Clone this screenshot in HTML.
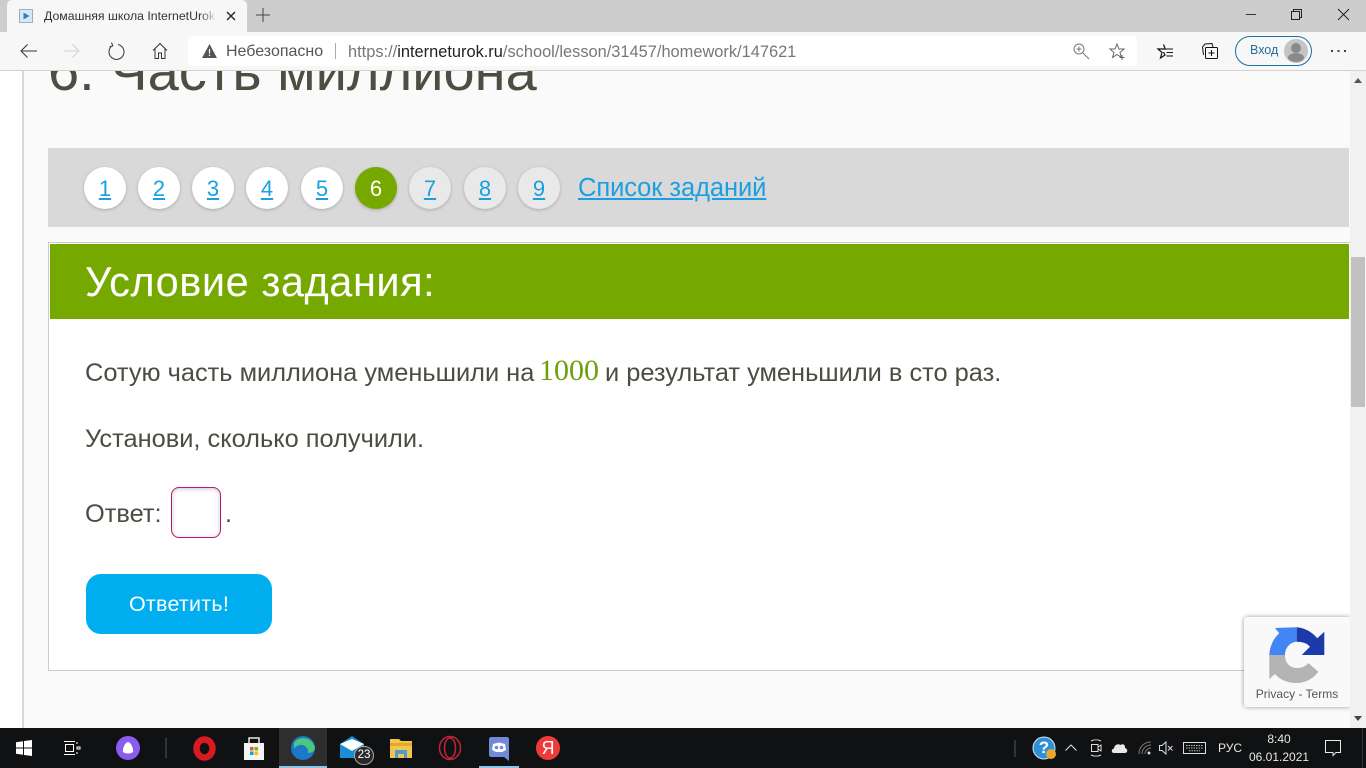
<!DOCTYPE html>
<html lang="ru"><head><meta charset="utf-8"><title>Домашняя школа InternetUrok.ru</title>
<style>
html,body{margin:0;padding:0;width:1366px;height:768px;overflow:hidden;background:#fafafa}
body{position:relative;font-family:"Liberation Sans","Noto Sans CJK SC",sans-serif;color:#4a4a40}
.a{position:absolute;white-space:nowrap}
svg{position:absolute;overflow:visible}
.c{position:absolute;top:167px;width:42px;height:42px;border-radius:50%;background:#fff;box-shadow:0 1px 3px rgba(0,0,0,.22);text-align:center;line-height:44px;font-size:22px;color:#1a9fe0;text-decoration:underline}
.c.v{background:#e9e9e9}
.t{font-size:25.4px;color:#4c4c42;line-height:30px}
.i{fill:none;stroke:#333;stroke-width:1}
</style></head><body>

<!-- page -->
<div class="a" style="left:0;top:70px;width:23px;height:658px;background:#fff"></div>
<div class="a" style="left:22px;top:70px;width:2px;height:658px;background:#d8dadc"></div>
<div class="a" style="left:48px;top:36px;font-size:56px;line-height:70px;color:#4d4d42">6. Часть миллиона</div>

<div class="a" style="left:48px;top:148px;width:1301px;height:79px;background:#d9d9d9"></div>
<div class="c" style="left:84px">1</div>
<div class="c" style="left:138px">2</div>
<div class="c" style="left:192px">3</div>
<div class="c" style="left:246px">4</div>
<div class="c" style="left:301px">5</div>
<div class="c" style="left:355px;background:#76a900;color:#fff;text-decoration:none">6</div>
<div class="c v" style="left:409px">7</div>
<div class="c v" style="left:464px">8</div>
<div class="c v" style="left:518px">9</div>
<div class="a" style="left:578px;top:173px;font-size:25.5px;line-height:30px;color:#1a9fe0;text-decoration:underline;letter-spacing:-.08px">Список заданий</div>

<div class="a" style="left:48px;top:242px;width:1301px;height:427px;background:#fff;border-top:1px solid #ccc;border-left:1px solid #ccc;border-bottom:1px solid #ccc"></div>
<div class="a" style="left:50px;top:244px;width:1299px;height:75px;background:#76a900"></div>
<div class="a" style="left:85px;top:258px;font-size:41.5px;line-height:48px;color:#fff;letter-spacing:.55px">Условие задания:</div>

<div class="a t" style="left:85px;top:358px">Сотую часть миллиона уменьшили на</div>
<div class="a" style="left:539px;top:354px;font:30px/34px 'Liberation Serif',serif;color:#6e9f0a">1000</div>
<div class="a t" style="left:605px;top:358px">и результат уменьшили в сто раз.</div>
<div class="a t" style="left:85px;top:424px">Установи, сколько получили.</div>
<div class="a t" style="left:85px;top:499px">Ответ:</div>
<div class="a" style="left:171px;top:487px;width:48px;height:49px;border:1px solid #b8186e;border-radius:8px;background:#fff;box-shadow:inset 0 1px 4px rgba(0,0,0,.22)"></div>
<div class="a t" style="left:225px;top:499px">.</div>
<div class="a" style="left:86px;top:574px;width:186px;height:60px;border-radius:15px;background:#00aeef;color:#fff;text-align:center;line-height:61px;font-size:21.5px;letter-spacing:.25px">Ответить!</div>

<!-- recaptcha -->
<div class="a" style="left:1244px;top:617px;width:106px;height:90px;background:#f9f9f9;border-radius:3px 0 0 3px;box-shadow:0 0 5px rgba(0,0,0,.4)"></div>
<svg style="left:1268px;top:626px" width="58" height="58" viewBox="0 0 58 58">
<path d="M1.300 29C2 19 6 12 11.300 7.300L7 2L28.700 1.300V15.700C22 16 17 22 17 29Z" fill="#4285f4"/>
<path d="M28.700 1.300C37 2 44 6 49.300 12.300L56.300 5.700V29H33.700L42 20.700C39 17 34 15.700 28.700 15.700Z" fill="#1c3aa9"/>
<path d="M1.300 29H17C17 37 22 42 29 42C34 42 38 40 40.300 37L50.300 45.700C45 53 37 57 28.700 57C20 57 12 54 7 48L1.300 53Z" fill="#b4b4b4"/>
</svg>
<div class="a" style="left:1244px;top:687px;width:106px;text-align:center;font-size:12px;line-height:15px;color:#555">Privacy - Terms</div>

<!-- scrollbar -->
<div class="a" style="left:1350px;top:70px;width:16px;height:658px;background:#f1f1f1"></div>
<div class="a" style="left:1351px;top:257px;width:14px;height:150px;background:#c1c1c1"></div>
<svg style="left:1350px;top:70px" width="16" height="658"><path d="M8 8L12 13H4Z" fill="#555"/><path d="M4 646H12L8 651Z" fill="#444"/></svg>

<!-- tab strip -->
<div class="a" style="left:0;top:0;width:1366px;height:32px;background:#cdcdcd"></div>
<div class="a" style="left:0;top:32px;width:1366px;height:38px;background:#f7f7f7;border-bottom:1px solid #d2d2d2"></div>
<div class="a" style="left:7px;top:0;width:240px;height:36px;background:#f7f7f7;border-radius:5px 5px 0 0"></div>
<svg style="left:19px;top:9px" width="14" height="14"><rect x=".5" y=".5" width="13" height="13" fill="#d8e8f4" stroke="#8fb4d0"/><path d="M4.500 3.500L10.500 7L4.500 10.500Z" fill="#3e7fb0"/></svg>
<div class="a" style="left:44px;top:8px;width:172px;overflow:hidden;font-size:12.300px;line-height:16px;color:#333">Домашняя школа InternetUrok.ru</div>
<div class="a" style="left:200px;top:6px;width:17px;height:20px;background:linear-gradient(90deg,rgba(247,247,247,0),#f7f7f7)"></div>
<svg style="left:226px;top:11px" width="10" height="10"><path d="M1 1L9 9M9 1L1 9" stroke="#222" stroke-width="1.300" fill="none"/></svg>
<svg style="left:256px;top:8px" width="14" height="14"><path d="M7 0V14M0 7H14" stroke="#444" fill="none"/></svg>
<svg style="left:1246px;top:14px" width="10" height="2"><path d="M0 .5H10" stroke="#333" fill="none"/></svg>
<svg style="left:1291px;top:9px" width="11" height="11"><path d="M.5 2.500H8.500V10.500H.5ZM2.500 2.500V.5H10.500V8.500H8.500" stroke="#222" fill="none"/></svg>
<svg style="left:1338px;top:9px" width="11" height="11"><path d="M0 0L11 11M11 0L0 11" stroke="#222" fill="none"/></svg>

<!-- toolbar -->
<div class="a" style="left:188px;top:36px;width:949px;height:30px;background:#fff;border-radius:4px"></div>
<svg class="i" style="left:20px;top:44px" width="17" height="14"><path d="M17 7H1M7.500 .5L1 7L7.500 13.500"/></svg>
<svg style="left:64px;top:44px" width="16" height="14"><path d="M0 7H15M8.500 .5L15 7L8.500 13.500" stroke="#d0d0d0" fill="none"/></svg>
<svg class="i" style="left:108px;top:42px" width="16" height="17"><path d="M4.500 3.500A7.500 7.500 0 1 0 10 2.500M3.500 .5L4.800 3.800L1.500 5"/></svg>
<svg class="i" style="left:153px;top:43px" width="14" height="16"><path d="M0 7.500L7 .5L14 7.500M2 6V15.500H5.500V10H8.500V15.500H12V6"/></svg>
<svg style="left:202px;top:44px" width="15" height="14"><path d="M7.500 0L15 14H0Z" fill="#555"/><path d="M7.500 5V9.500M7.500 10.500V12" stroke="#fff" stroke-width="1.200"/></svg>
<div class="a" style="left:226px;top:43px;font-size:16px;line-height:18px;color:#555">Небезопасно</div>
<div class="a" style="left:335px;top:43px;width:1px;height:16px;background:#aaa"></div>
<div class="a" style="left:348px;top:43px;font-size:16.400px;line-height:18px;color:#777">https://<span style="color:#222">interneturok.ru</span>/school/lesson/31457/homework/147621</div>
<svg style="left:1073px;top:43px" width="16" height="16"><circle cx="6" cy="6" r="5" fill="none" stroke="#777"/><path d="M6 3.500V8.500M3.500 6H8.500M10 10L16 16" stroke="#777" fill="none"/></svg>
<svg style="left:1109px;top:43px" width="17" height="17"><path d="M8 1L10 6H15L11 9.500L12.500 14.500L8 11.500L3.500 14.500L5 9.500L1 6H6Z" fill="none" stroke="#666"/><path d="M13 12V17M10.500 14.500H15.500" stroke="#666"/></svg>
<svg style="left:1157px;top:44px" width="17" height="15"><path d="M6.500 .5L8.300 5H1L5 8.500L3.500 14L8 11L6.500 8" fill="none" stroke="#111" stroke-width="1.200"/><path d="M9 5H16M9.500 8.500H16M9.500 12H16" stroke="#111"/></svg>
<svg style="left:1202px;top:43px" width="16" height="16"><rect x="3.500" y="4.500" width="12" height="11" rx="1" fill="none" stroke="#111"/><path d="M1.500 12L.5 4L3 1L10 .5L11 4M9.500 7V13M6.500 10H12.500" fill="none" stroke="#111"/></svg>
<div class="a" style="left:1235px;top:36px;width:75px;height:28px;border:1px solid #1f6f9c;border-radius:15px"></div>
<div class="a" style="left:1250px;top:43px;font-size:12.500px;line-height:15px;color:#1f6f9c">Вход</div>
<svg style="left:1284px;top:39px" width="24" height="24"><circle cx="12" cy="12" r="12" fill="#c4c4c4"/><circle cx="12" cy="9" r="5" fill="#8a8a8a"/><ellipse cx="12" cy="18.500" rx="8" ry="4.500" fill="#8a8a8a"/></svg>
<svg style="left:1331px;top:50px" width="15" height="2"><path d="M0 0h2v2h-2zM6.500 0h2v2h-2zM13 0h2v2h-2z" fill="#444"/></svg>

<!-- taskbar -->
<div class="a" style="left:0;top:728px;width:1366px;height:40px;background:#101112"></div>
<div class="a" style="left:279px;top:728px;width:48px;height:40px;background:#2e2e2e"></div>
<div class="a" style="left:279px;top:766px;width:48px;height:2px;background:#8ec3e8"></div>
<div class="a" style="left:479px;top:766px;width:40px;height:2px;background:#8ec3e8"></div>
<svg style="left:16px;top:740px" width="16" height="16"><path d="M0 2.200L7 1.200V7.500H0ZM8 1L16 0V7.500H8ZM0 8.500H7V14.800L0 13.800ZM8 8.500H16V16L8 15Z" fill="#fff"/></svg>
<svg style="left:64px;top:741px" width="16" height="14"><path d="M0 .5H11M0 13.500H11M1.500 3.500H9.500V10.500H1.500Z" fill="none" stroke="#fff"/><path d="M13 1V3M13 6H16V8H13ZM13 11V13" stroke="#fff" fill="none"/></svg>
<svg style="left:116px;top:736px" width="24" height="24"><circle cx="12" cy="12" r="12" fill="#8a5cf0"/><path d="M12 6C15 6 18 14 17 16C15 18 9 18 7 16C6 14 9 6 12 6Z" fill="#fff"/></svg>
<div class="a" style="left:165px;top:738px;width:2px;height:20px;background:#333"></div>
<svg style="left:193px;top:737px" width="23" height="23"><ellipse cx="11.500" cy="11.500" rx="8" ry="9" fill="none" stroke="#d81a22" stroke-width="6.500"/></svg>
<svg style="left:243px;top:736px" width="22" height="24"><path d="M1 7H21V24H1Z" fill="#f4f4f4"/><path d="M6 8V2H16V8" fill="none" stroke="#e8e8e8" stroke-width="1.500"/><rect x="7" y="11" width="3.500" height="3.500" fill="#e8562a"/><rect x="11.500" y="11" width="3.500" height="3.500" fill="#7fba00"/><rect x="7" y="15.500" width="3.500" height="3.500" fill="#00a4ef"/><rect x="11.500" y="15.500" width="3.500" height="3.500" fill="#ffb900"/></svg>
<svg style="left:291px;top:736px" width="24" height="24"><circle cx="12" cy="12" r="12" fill="#1b78c9"/><path d="M3 7C7 0 20 0 24 11C24 16 19 18 15 16C18 12 13 8 9 9C6 9.500 4 11 3 13Z" fill="#4ac97e"/><circle cx="13.500" cy="14.500" r="3.500" fill="#1b78c9"/></svg>
<svg style="left:340px;top:736px" width="24" height="22"><path d="M0 8L12 0L24 8V22H0Z" fill="#1b8fd6"/><path d="M0 8L12 15L24 8L12 3Z" fill="#fff"/></svg>
<div class="a" style="left:354px;top:746px;width:18px;height:17px;border:1px solid #aaa;border-radius:10px;background:#2a2a2a;color:#fff;font-size:11.500px;line-height:17px;text-align:center">23</div>
<svg style="left:390px;top:738px" width="22" height="20"><path d="M0 1H9L11 3H22V20H0Z" fill="#f0c64c"/><path d="M0 5H22V8H0Z" fill="#e0a92c"/><path d="M5 12H17V20H14V16H8V20H5Z" fill="#4f9ccc"/></svg>
<svg style="left:438px;top:736px" width="24" height="24"><ellipse cx="12" cy="12" rx="10.500" ry="11.500" fill="none" stroke="#c4233a" stroke-width="1.500"/><ellipse cx="12" cy="12" rx="5.500" ry="10" fill="none" stroke="#c4233a" stroke-width="1.500"/></svg>
<svg style="left:489px;top:737px" width="20" height="24"><path d="M2 0H18C19 0 20 1 20 2V24L15 20H2C1 20 0 19 0 18V2C0 1 1 0 2 0Z" fill="#7289da"/><path d="M4 7L10 5.500L16 7L17 13L13 15H7L3 13Z" fill="#fff"/><circle cx="7.500" cy="10.500" r="1.800" fill="#7289da"/><circle cx="12.500" cy="10.500" r="1.800" fill="#7289da"/></svg>
<div class="a" style="left:536px;top:736px;width:24px;height:24px;border-radius:50%;background:#f03a3a;color:#fff;text-align:center;font-size:18px;line-height:24px">Я</div>

<div class="a" style="left:1014px;top:740px;width:2px;height:17px;background:#333"></div>
<svg style="left:1033px;top:737px" width="23" height="23"><circle cx="11" cy="11" r="11" fill="#2c8fd8" stroke="#cfe8f8" stroke-width="1"/><circle cx="18" cy="17" r="5" fill="#e8a830"/></svg>
<div class="a" style="left:1033px;top:737px;width:22px;text-align:center;font-size:17px;line-height:22px;font-weight:bold;color:#fff">?</div>
<svg style="left:1065px;top:744px" width="12" height="7"><path d="M.5 6.500L6 1L11.500 6.500" fill="none" stroke="#ddd" stroke-width="1.100"/></svg>
<svg style="left:1090px;top:740px" width="12" height="16"><path d="M1 1C4 -.5 8 -.5 11 1M1 15C4 16.500 8 16.500 11 15M1.500 4.500H8V11.500H1.500ZM8 7L11 5V11L8 9" fill="none" stroke="#ddd"/></svg>
<svg style="left:1111px;top:742px" width="17" height="11"><path d="M3 11C0 11 0 7 3 6.500C3 3 7 1 9.500 3C12 1 14.500 3 14 6C17 6.500 17 11 14 11Z" fill="#e8e8e8"/></svg>
<svg style="left:1138px;top:741px" width="13" height="14"><path d="M1 13C1 6 6 1 13 1M4 13C4 8 8 4 13 4M7 13C7 10 10 7 13 7" fill="none" stroke="#777"/><circle cx="11" cy="12" r="1.500" fill="#ddd"/></svg>
<svg style="left:1159px;top:741px" width="14" height="14"><path d="M.5 4.500H3L7 1V13L3 9.500H.5Z" fill="none" stroke="#ddd"/><path d="M9 5L13.500 9.500M13.500 5L9 9.500" stroke="#ddd" fill="none"/></svg>
<svg style="left:1183px;top:742px" width="23" height="12"><rect x=".5" y=".5" width="22" height="11" fill="none" stroke="#ddd"/><path d="M3 3.500H20M3 6H20M6 8.800H17" stroke="#bbb" stroke-dasharray="1.500 1" fill="none"/></svg>
<div class="a" style="left:1218px;top:741px;font-size:12px;line-height:15px;color:#e8e8e8">РУС</div>
<div class="a" style="left:1249px;top:731px;width:60px;text-align:center;font-size:12px;line-height:16px;color:#e8e8e8">8:40</div>
<div class="a" style="left:1249px;top:749px;width:60px;text-align:center;font-size:12px;line-height:16px;color:#e8e8e8">06.01.2021</div>
<svg style="left:1325px;top:740px" width="16" height="16"><path d="M.5 .5H15.500V12.500H11L8 15.500V12.500H.5Z" fill="none" stroke="#e8e8e8"/></svg>
<div class="a" style="left:1362px;top:728px;width:1px;height:40px;background:#333"></div>
</body></html>
